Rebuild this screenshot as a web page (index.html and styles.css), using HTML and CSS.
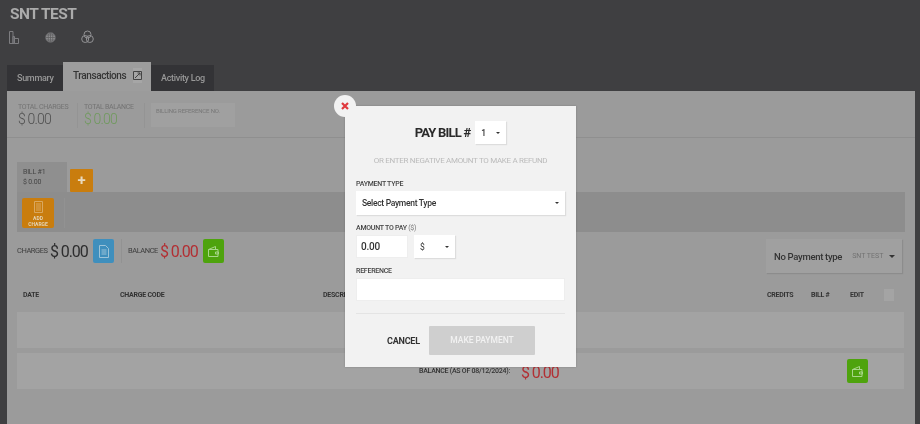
FILE: index.html
```html
<!DOCTYPE html>
<html lang="en">
<head>
    <meta charset="UTF-8">
    <meta name="viewport" content="width=device-width, initial-scale=1.0">
    <title>SNT TEST - Transactions</title>
    <link rel="stylesheet" href="styles.css">
</head>
<body>
    <!-- Header -->
    <div class="header">
        <h1>SNT TEST</h1>
        <div class="header-icons">
            <svg width="10" height="13" viewBox="0 0 10 13" fill="none" stroke="#7d7d80"><path d="M.5 12.500V.5h3.500v12zM4 5.500h1.500v7H4zM5.500 7.500h4v5h-4z"/></svg>
            <svg width="11" height="11" viewBox="0 0 11 11" fill="#8e8e90" stroke="#5a5a5c" stroke-width=".7"><circle cx="5.500" cy="5.500" r="5"/><path fill="none" d="M.7 5.500h9.600M1.400 3h8.200M1.400 8h8.200M5.500.7v9.600"/><ellipse fill="none" cx="5.500" cy="5.500" rx="2.300" ry="4.800"/></svg>
            <svg width="13" height="14" viewBox="0 0 13 14" fill="none" stroke="#929294"><circle cx="6.500" cy="4.500" r="3.500"/><circle cx="4.200" cy="9" r="3.500"/><circle cx="8.800" cy="9" r="3.500"/></svg>
        </div>
    </div>

    <!-- Tabs -->
    <div class="tabs">
        <div class="tab">Summary</div>
        <div class="tab active">
            Transactions
            <span class="tab-expand">
                <svg width="9" height="9" viewBox="0 0 9 9" fill="none" stroke="#444"><path d="M.5.500h8v8h-8zM2 7l5-5M4.500 2H7v2.500"/></svg>
            </span>
        </div>
        <div class="tab">Activity Log</div>
    </div>

    <div class="panel">
        <div class="totals">
            <div class="total">
                <div class="total-label">TOTAL CHARGES</div>
                <div class="total-value">$ 0.00</div>
            </div>
            <div class="total">
                <div class="total-label">TOTAL BALANCE</div>
                <div class="total-value green">$ 0.00</div>
            </div>
            <div class="billing-ref">BILLING REFERENCE NO.</div>
        </div>

        <div class="bill-tabs">
            <div class="bill-tab">BILL #1<br>$ 0.00</div>
            <div class="add-bill">+</div>
        </div>
        <div class="bill-strip">
            <div class="add-charge">
                <svg width="9" height="12" viewBox="0 0 9 12" fill="none" stroke="#d9a860"><path d="M.5.500h8v11h-8zM2 3h5M2 5h5M2 7h5M2 9h5"/></svg>
                <span>ADD<br>CHARGE</span>
            </div>
            <div class="strip-sep"></div>
        </div>

        <div class="summary-row">
            <div class="summary-left">
                <span class="summary-label">CHARGES</span>
                <span class="summary-value">$ 0.00</span>
                <div class="icon-btn blue">
                    <svg width="10" height="13" viewBox="0 0 10 13" fill="none" stroke="#9cc3d8"><path d="M.5.500h6l3 3v9h-9zM2.500 5h5M2.500 7h5M2.500 9h5"/></svg>
                </div>
                <div class="summary-sep"></div>
                <span class="summary-label">BALANCE</span>
                <span class="summary-value red">$ 0.00</span>
                <div class="icon-btn green-btn">
                    <svg width="11" height="11" viewBox="0 0 11 11" fill="none" stroke="#a8d68a"><path d="M.5 3.500l7-3v3M.5 3.500h9.500v7H.5zM7.500 6h3v2h-3z"/></svg>
                </div>
            </div>
            <div class="payment-box">
                <span class="payment-name">No Payment type</span>
                <span class="payment-org">SNT TEST</span>
                <span class="caret"></span>
            </div>
        </div>

        <div class="table-head">
            <span class="col-date">DATE</span>
            <span class="col-code">CHARGE CODE</span>
            <span class="col-desc">DESCRIPTION</span>
            <span class="col-credits">CREDITS</span>
            <span class="col-bill">BILL #</span>
            <span class="col-edit">EDIT</span>
            <span class="check"></span>
        </div>
        <div class="table-row"></div>
        <div class="table-row">
            <span class="row-balance">BALANCE (AS OF 08/12/2024):</span>
            <span class="row-value">$ 0.00</span>
            <div class="icon-btn green-btn row-btn">
                <svg width="11" height="11" viewBox="0 0 11 11" fill="none" stroke="#a8d68a"><path d="M.5 3.500l7-3v3M.5 3.500h9.500v7H.5zM7.500 6h3v2h-3z"/></svg>
            </div>
        </div>
    </div>

    <!-- Pay bill modal -->
    <div class="modal">
        <div class="modal-close">
            <svg width="8" height="8" viewBox="0 0 8 8" stroke="#e0393e" stroke-width="2.200"><path d="M1 1l6 6M7 1L1 7"/></svg>
        </div>
        <div class="modal-title">
            PAY BILL #
            <div class="select select-bill"><span>1</span><span class="caret small"></span></div>
        </div>
        <div class="modal-sub">OR ENTER NEGATIVE AMOUNT TO MAKE A REFUND</div>

        <label class="field-label">PAYMENT TYPE</label>
        <div class="select select-wide"><span>Select Payment Type</span><span class="caret small"></span></div>

        <label class="field-label">AMOUNT TO PAY <span class="light">($)</span></label>
        <div class="amount-row">
            <div class="input-box amount">0.00</div>
            <div class="select select-cur"><span>$</span><span class="caret small"></span></div>
        </div>

        <label class="field-label">REFERENCE</label>
        <div class="input-box reference"></div>

        <div class="modal-line"></div>
        <div class="modal-actions">
            <span class="cancel">CANCEL</span>
            <div class="make-payment">MAKE PAYMENT</div>
        </div>
    </div>
</body>
</html>
```

FILE: styles.css
```css
* { box-sizing: border-box; }
body { margin: 0; height: 424px; overflow: hidden; position: relative; background: #3f3f41; font-family: "Roboto", sans-serif; color: #2f2f30; }
.header, .tabs, .panel, .modal { filter: blur(0.35px); }

.header { height: 62px; padding: 5px 0 0 10px; }
h1 { margin: 0; font-size: 15.500px; line-height: 19px; font-weight: 700; letter-spacing: -0.5px; color: #ababab; }
.header-icons { display: flex; align-items: center; gap: 26px; margin-top: 6px; }
.header-icons svg:first-child { margin-left: -1px; }
.header-icons svg:last-child { margin-left: -1px; }

.tabs { display: flex; align-items: flex-end; margin-left: 7px; height: 29px; }
.tab { height: 26px; padding: 0 10px; display: flex; align-items: center; background: #333336; color: #989898; font-size: 9px; font-weight: 500; letter-spacing: -0.3px; white-space: nowrap; }
.tab:first-child { width: 56px; }
.tab.active { width: 88px; height: 29px; padding-bottom: 2px; background: #9d9d9d; color: #353535; font-size: 10px; letter-spacing: -0.4px; }
.tab:last-child { width: 63px; }
.tab-expand { width: 15px; height: 15px; margin-left: 7px; display: flex; align-items: center; justify-content: center; background: #a6a6a6; }

.panel { width: 908px; height: 333px; margin-left: 7px; background: #9b9b9b; padding: 0 10px; }

.totals { height: 47px; margin: 0 -10px; padding: 12px 0 0 11px; display: flex; border-bottom: 1px solid #8f8f8f; }
.total { width: 60px; margin-right: 6px; height: 25px; color: #666; border-right: 1px solid #949494; }
.total + .total { width: 61px; }
.total-label { font-size: 7px; line-height: 9px; letter-spacing: -0.3px; white-space: nowrap; color: #737373; }
.total-value { font-size: 14px; line-height: 15px; font-weight: 300; letter-spacing: -0.8px; color: #4f4f4f; }
.total-value.green { color: #6f9a5c; }
.billing-ref { width: 84px; height: 24px; padding: 3px 5px; background: #a0a0a0; font-size: 6px; line-height: 9px; letter-spacing: -0.150px; color: #777; white-space: nowrap; }

.bill-tabs { display: flex; align-items: flex-end; margin-top: 24px; height: 30px; }
.bill-tab { width: 50px; height: 30px; padding: 5px 6px; background: #8f8f8f; font-size: 7px; line-height: 10px; letter-spacing: -0.2px; color: #444; }
.add-bill { width: 23px; height: 23px; margin-left: 3px; background: #c97d0e; color: #e8d9bd; font-size: 15px; font-weight: 700; line-height: 23px; text-align: center; border-radius: 1px; }

.bill-strip { display: flex; height: 40px; padding: 6px 0 0 5px; background: #8d8d8d; }
.add-charge { width: 32px; height: 30px; padding-top: 3px; background: #c97d0e; border-radius: 2px; text-align: center; color: #e3d3b5; font-size: 5px; line-height: 6px; font-weight: 700; }
.add-charge svg { display: block; margin: 0 auto 2px; }
.strip-sep { width: 1px; height: 30px; margin-left: 10px; background: #929292; }

.summary-row { display: flex; justify-content: space-between; margin-top: 7px; height: 34px; padding-right: 3px; }
.summary-left { display: flex; align-items: center; height: 24px; }
.summary-label { width: 29px; margin-bottom: 2px; font-size: 7.500px; letter-spacing: -0.45px; color: #3d3d3d; }
.summary-value { width: 38px; margin-left: 4px; font-size: 16px; letter-spacing: -1.100px; color: #2d2d2e; white-space: nowrap; }
.summary-value.red { margin-left: 3px; color: #b22f33; }
.summary-sep { width: 1px; height: 24px; margin: 0 6px 0 7px; background: #929292; }
.icon-btn { width: 21px; height: 24px; margin-left: 5px; display: flex; align-items: center; justify-content: center; border-radius: 2px; }
.blue { background: #3f8fbd; }
.green-btn { background: #4ea30d; }

.payment-box { width: 136px; height: 34px; padding: 0 7px 0 8px; display: flex; align-items: center; background: #a0a0a0; box-shadow: 1px 1px 1px #8c8c8c; }
.payment-name { font-size: 9.500px; font-weight: 500; letter-spacing: -0.3px; color: #333; white-space: nowrap; }
.payment-org { margin-left: 10px; font-size: 7px; color: #727272; white-space: nowrap; }
.caret { width: 0; height: 0; margin-left: auto; border: 3px solid transparent; border-top-color: #333; border-bottom: 0; }
.caret.small { border-width: 2px 2px 0; }

.table-head { display: flex; align-items: center; height: 12px; margin-top: 16px; font-size: 7px; font-weight: 700; letter-spacing: -0.25px; color: #333; white-space: nowrap; }
.col-date { margin-left: 6px; width: 97px; }
.col-code { width: 203px; }
.col-desc { width: 444px; }
.col-credits { width: 44px; }
.col-bill { width: 39px; }
.col-edit { width: 34px; }
.check { width: 10px; height: 12px; background: #a4a4a4; }

.table-row { display: flex; align-items: center; width: 887px; height: 36px; margin-top: 5px; background: #a3a3a3; }
.table-head + .table-row { margin-top: 11px; }
.row-balance { margin-left: 402px; font-size: 7px; font-weight: 500; letter-spacing: -0.25px; color: #333; white-space: nowrap; }
.row-value { margin: 3px 0 0 11px; font-size: 16px; letter-spacing: -1.100px; color: #b22f33; }
.row-btn { margin-left: auto; margin-right: 36px; }

/* modal sits over the page */
.modal { position: absolute; left: 345px; top: 106px; width: 231px; height: 261px; padding: 0 11px; background: #f2f2f2; box-shadow: 0 0 2px rgba(0, 0, 0, 0.2); }
.modal-close { position: absolute; left: -11px; top: -11px; width: 22px; height: 22px; border-radius: 50%; background: #f2f2f2; display: flex; align-items: center; justify-content: center; }
.modal-title { display: flex; align-items: center; justify-content: center; gap: 5px; height: 23px; margin-top: 15px; font-size: 13px; font-weight: 700; letter-spacing: -0.8px; color: #2a2a2a; }
.modal-sub { margin-top: 11px; font-size: 8px; line-height: 11px; letter-spacing: -0.3px; color: #bbb; text-align: center; white-space: nowrap; }
.field-label { display: block; font-size: 7px; font-weight: 500; line-height: 10px; letter-spacing: -0.25px; color: #444; margin-top: 8px; margin-bottom: 2px; }
.modal-sub + .field-label { margin-top: 13px; }
.light { font-weight: 400; color: #777; }

.select { display: flex; align-items: center; justify-content: space-between; background: #fff; font-size: 8.500px; font-weight: 500; letter-spacing: -0.3px; color: #333; padding: 0 6px; box-shadow: 1px 1px 1px #ddd; }
.select-bill { width: 31px; height: 23px; font-weight: 500; letter-spacing: 0; }
.select-wide { width: 209px; height: 24px; }
.select-cur { width: 41px; height: 23px; font-weight: 400; }
.amount-row { display: flex; gap: 6px; }
.input-box { background: #fff; border: 1px solid #eee; }
.amount { width: 52px; height: 23px; padding: 0 4px; font-size: 10px; font-weight: 500; letter-spacing: -0.2px; line-height: 21px; color: #333; }
.reference { width: 209px; height: 23px; }
.modal-line { width: 209px; height: 1px; margin-top: 12px; background: #e4e4e4; }
.modal-actions { display: flex; align-items: center; margin-top: 12px; padding-left: 31px; }
.cancel { width: 42px; font-size: 9px; font-weight: 700; letter-spacing: -0.2px; color: #333; }
.make-payment { width: 106px; height: 29px; line-height: 29px; text-align: center; background: #cfcfcf; color: #f2f2f2; font-size: 8.500px; font-weight: 500; border-radius: 1px; letter-spacing: -0.05px; }
```
